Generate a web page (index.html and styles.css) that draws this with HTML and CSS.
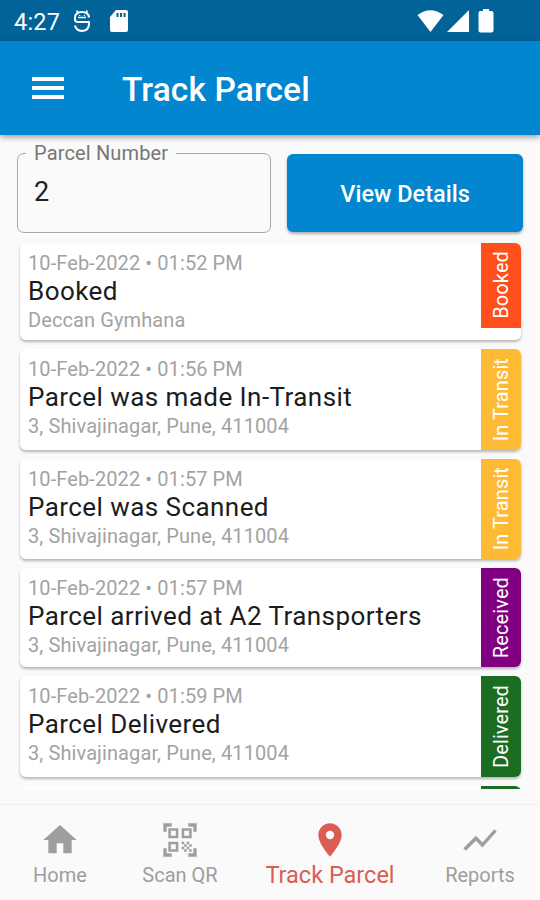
FILE: index.html
```html
<!DOCTYPE html>
<html lang="en">
  <head>
    <meta charset="UTF-8" />
    <meta name="viewport" content="width=device-width, initial-scale=1.0" />
    <title>Track Parcel</title>
    <link rel="stylesheet" href="styles.css">
  </head>
  <body>
    <div class="status-bar">
      <span class="clock">4:27</span>
      <svg class="status-face" width="18" height="24" viewBox="0 0 18 24" fill="none" stroke="#fff" stroke-width="2">
        <path d="M16 8.500Q15.500 3 9 3T2 8.500v2Q2 13 5 13h11v2q0 6.500-7 7-6-.5-7-5.500" />
        <path d="M5 8.500h8M3.500 1.500L5 3.500M14.500 1.500L13 3.500" stroke-width="1.500" />
        <path d="M6 6.500h1.300M10.700 6.500H12" stroke-width="1.200" />
      </svg>
      <svg class="status-card" width="20" height="24" viewBox="0 0 20 24">
        <path fill="#fff" d="M7 1h10q2 0 2 2v18q0 2-2 2H3q-2 0-2-2V8z" />
        <path fill="#026398" d="M7.500 4h2v4h-2zM11 4h2v4h-2zM14.500 4h2v4h-2z" />
      </svg>
      <div class="status-right">
        <svg width="27" height="24" viewBox="0 0 27 24"><path fill="#fff" d="M.5 6Q13.500-3.500 26.500 6L13.500 23z" /></svg>
        <svg width="24" height="24" viewBox="0 0 24 24"><path fill="#fff" d="M23 1v22H1z" /></svg>
        <svg class="battery" width="16" height="24" viewBox="0 0 16 24"><path fill="#fff" d="M5 0h6v2h2.500q2 0 2 2v17.500q0 2-2 2h-11q-2 0-2-2V4q0-2 2-2H5z" /></svg>
      </div>
    </div>

    <header class="app-bar">
      <button class="menu-btn" type="button" aria-label="Menu">
        <span></span>
        <span></span>
        <span></span>
      </button>
      <h1>Track Parcel</h1>
    </header>

    <main>
      <form class="search-form">
        <fieldset class="field">
          <legend>Parcel Number</legend>
          <input type="text" value="2" aria-label="Parcel Number" />
        </fieldset>
        <button class="details-btn" type="button">View Details</button>
      </form>

      <div class="events">
        <div class="card">
          <div class="info">
            <p class="date">10-Feb-2022 • 01:52 PM</p>
            <p class="title">Booked</p>
            <p class="place">Deccan Gymhana</p>
          </div>
          <div class="badge booked"><span>Booked</span></div>
        </div>
        <div class="card">
          <div class="info">
            <p class="date">10-Feb-2022 • 01:56 PM</p>
            <p class="title">Parcel was made In-Transit</p>
            <p class="place">3, Shivajinagar, Pune, 411004</p>
          </div>
          <div class="badge transit"><span>In Transit</span></div>
        </div>
        <div class="card">
          <div class="info">
            <p class="date">10-Feb-2022 • 01:57 PM</p>
            <p class="title">Parcel was Scanned</p>
            <p class="place">3, Shivajinagar, Pune, 411004</p>
          </div>
          <div class="badge transit"><span>In Transit</span></div>
        </div>
        <div class="card">
          <div class="info">
            <p class="date">10-Feb-2022 • 01:57 PM</p>
            <p class="title">Parcel arrived at A2 Transporters</p>
            <p class="place">3, Shivajinagar, Pune, 411004</p>
          </div>
          <div class="badge received"><span>Received</span></div>
        </div>
        <div class="card">
          <div class="info">
            <p class="date">10-Feb-2022 • 01:59 PM</p>
            <p class="title">Parcel Delivered</p>
            <p class="place">3, Shivajinagar, Pune, 411004</p>
          </div>
          <div class="badge delivered"><span>Delivered</span></div>
        </div>
        <div class="card">
          <div class="info"></div>
          <div class="badge delivered"></div>
        </div>
      </div>
    </main>

    <nav class="bottom-nav">
      <a class="nav-item">
        <svg viewBox="0 0 24 24"><path d="M10 20v-6h4v6h5v-8h3L12 3 2 12h3v8z" /></svg>
        <span>Home</span>
      </a>
      <a class="nav-item">
        <svg viewBox="0 0 24 24"><path d="M9.500 6.500v3h-3v-3h3M11 5H5v6h6V5zm-1.500 9.500v3h-3v-3h3M11 13H5v6h6v-6zm6.500-6.500v3h-3v-3h3M19 5h-6v6h6V5zm-6 8h1.500v1.500H13V13zm1.500 1.500H16V16h-1.500v-1.500zM16 13h1.500v1.500H16V13zm-3 3h1.500v1.500H13V16zm1.500 1.500H16V19h-1.500v-1.500zM16 16h1.500v1.500H16V16zm1.500-1.500H19V16h-1.500v-1.500zm0 3H19V19h-1.500v-1.500zM22 7h-2V4h-3V2h5v5zm0 15v-5h-2v3h-3v2h5zM2 22h5v-2H4v-3H2v5zM2 2v5h2V4h3V2H2z" /></svg>
        <span>Scan QR</span>
      </a>
      <a class="nav-item active">
        <svg viewBox="0 0 24 24"><path d="M12 2C8.130 2 5 5.130 5 9c0 5.250 7 13 7 13s7-7.750 7-13c0-3.870-3.130-7-7-7zm0 9.500a2.500 2.500 0 0 1 0-5 2.500 2.500 0 0 1 0 5z" /></svg>
        <span>Track Parcel</span>
      </a>
      <a class="nav-item">
        <svg viewBox="0 0 24 24"><path d="M3.500 18.490l6-6.010 4 4L22 6.920l-1.410-1.410-7.090 7.970-4-4L2 16.990z" /></svg>
        <span>Reports</span>
      </a>
    </nav>
  </body>
</html>
```

FILE: styles.css
```css
* {
  box-sizing: border-box;
}
body {
  margin: 0;
  height: 900px;
  display: flex;
  flex-direction: column;
  overflow: hidden;
  font-family: Roboto, "Liberation Sans", sans-serif;
  background: #fafafa;
}
h1,
p {
  margin: 0;
  font-weight: normal;
  white-space: nowrap;
}
button {
  border: none;
  font-family: inherit;
  cursor: pointer;
}

/* Status bar */
.status-bar {
  flex: none;
  height: 41px;
  padding: 0 46px 0 14px;
  display: flex;
  align-items: center;
  color: #fff;
  background: #026398;
}
.clock {
  width: 59px;
  font-size: 23.5px;
  letter-spacing: 0.2px;
  line-height: 24px;
  padding-top: 3px;
}
.status-card {
  margin-left: 18px;
}
.status-right {
  margin-left: auto;
  display: flex;
  gap: 2px;
}
.battery {
  margin-left: 6px;
}

/* App bar */
.app-bar {
  flex: none;
  height: 94px;
  padding-left: 32px;
  display: flex;
  align-items: center;
  color: #fff;
  background: #0286d0;
  box-shadow: 0 2px 6px rgba(0, 0, 0, 0.4);
  z-index: 1;
}
.menu-btn {
  width: 32px;
  padding: 0;
  display: grid;
  gap: 5px;
  background: none;
}
.menu-btn span {
  height: 4px;
  background: #fff;
}
h1 {
  margin-left: 58px;
  padding-top: 2px;
  font-size: 33.5px;
  font-weight: 500;
  letter-spacing: 0.1px;
}

main {
  flex: 1;
  padding: 8px 17px 0;
}
.search-form {
  display: flex;
  gap: 16px;
  height: 91px;
}
.field {
  margin: 0;
  width: 254px;
  height: 90px;
  min-width: 0;
  padding: 0 16px;
  border: 1.5px solid #a9a9a9;
  border-radius: 7px;
}
.field legend {
  padding: 0 8px;
  margin-left: -8px;
  font-size: 20px;
  line-height: 20px;
  letter-spacing: 0.15px;
  color: #777;
}
.field input {
  width: 100%;
  margin-top: 13px;
  padding: 0;
  border: none;
  outline: none;
  background: none;
  font: 27px/32px Roboto, sans-serif;
  color: #222;
}
.details-btn {
  width: 236px;
  height: 78px;
  margin-top: 11px;
  padding-top: 3px;
  border-radius: 6px;
  color: #fff;
  background: #0286d0;
  font-size: 23.5px;
  font-weight: 500;
  box-shadow: 0 2px 3px rgba(0, 0, 0, 0.3);
}

/* Parcel events, cut off where the list scrolls */
.events {
  height: 555px;
  margin: 0 -17px;
  padding: 8.5px 19px 0 20px;
  overflow: hidden;
}
.card {
  display: flex;
  align-items: flex-start;
  margin-bottom: 9px;
  border-radius: 6px;
  overflow: hidden;
  background: #fff;
  box-shadow: 0 2px 3px rgba(0, 0, 0, 0.28);
}
.info {
  flex: 1;
  height: 97.5px;
  padding: 8px 8px 0;
}
.date,
.place {
  font-size: 20px;
  line-height: 24px;
  letter-spacing: 0.1px;
  color: #a3a3a3;
}
.title {
  font-size: 26px;
  line-height: 32px;
  letter-spacing: 0.44px;
  color: #1c1c1c;
}
.place {
  line-height: 26px;
}
.badge {
  width: 40px;
  height: 100.5px;
  display: flex;
  align-items: center;
  justify-content: center;
  color: #fff;
  font-size: 20px;
  letter-spacing: 0.1px;
}
.badge span {
  writing-mode: vertical-rl;
  transform: rotate(180deg);
  white-space: nowrap;
}
.booked {
  height: 85px;
  background: #ff4f1a;
}
.transit {
  background: #ffba35;
}
.received {
  height: 99px;
  background: #810081;
}
.delivered {
  background: #1b6d22;
}

/* Bottom navigation */
.bottom-nav {
  flex: none;
  height: 96px;
  display: grid;
  grid-template-columns: 120px 120px 180px 120px;
  border-top: 1px solid #f0f0f0;
}
.nav-item {
  display: flex;
  flex-direction: column;
  align-items: center;
  padding-top: 15px;
  color: #9e9e9e;
  font-size: 20px;
}
.nav-item svg {
  width: 40px;
  height: 40px;
  fill: currentColor;
}
.nav-item span {
  line-height: 30px;
}
.active {
  color: #db5d52;
  font-size: 23.5px;
}
```
